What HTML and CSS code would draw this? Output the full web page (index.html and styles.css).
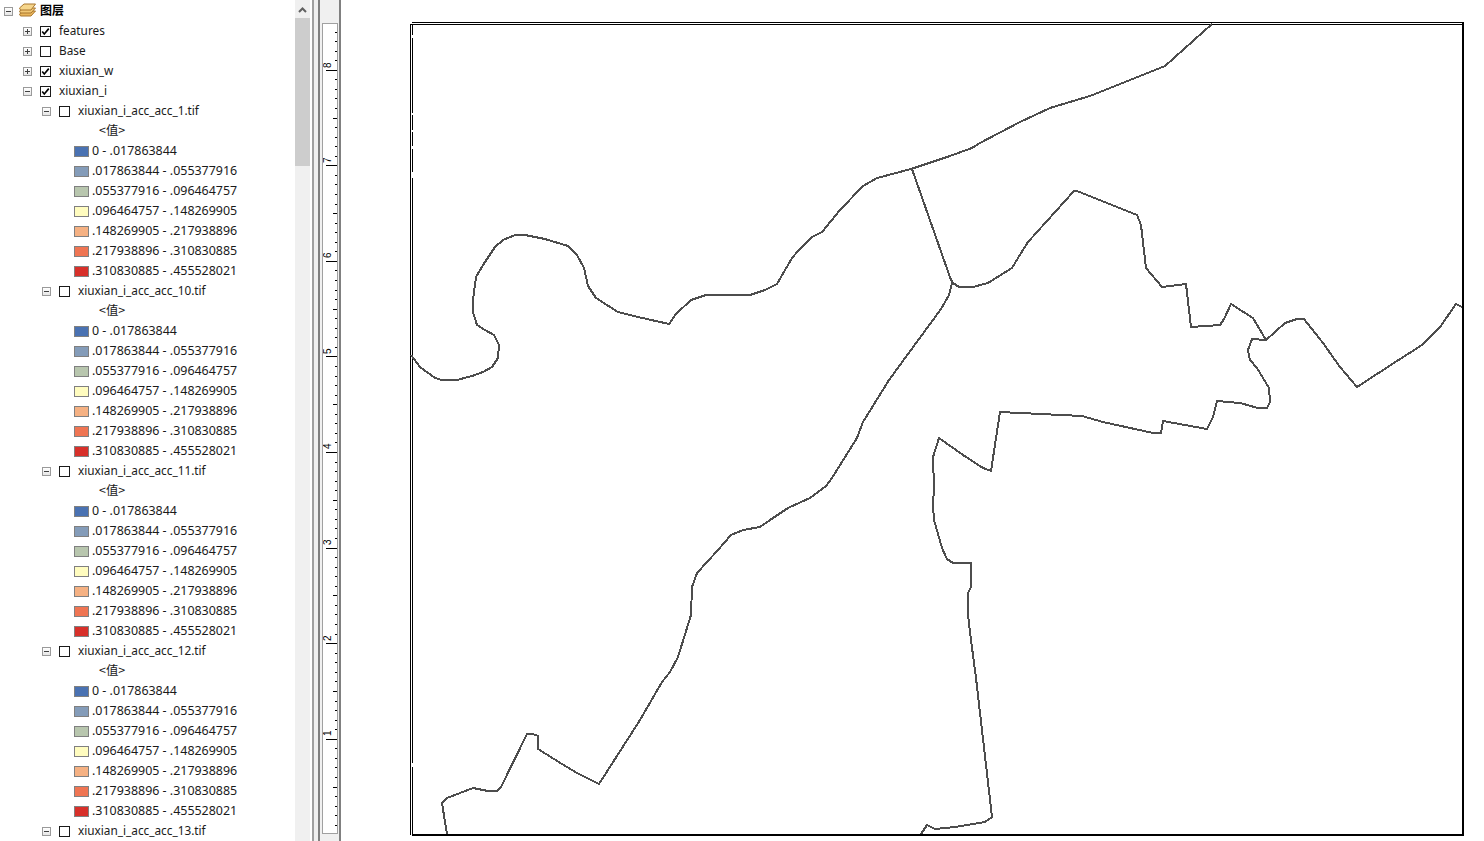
FILE: index.html
```html
<!DOCTYPE html>
<html lang="zh-CN">
<head>
  <meta charset="UTF-8" />
  <title>图层</title>
  <link rel="stylesheet" href="styles.css">
</head>
<body>

<svg class="defs" width="0" height="0">
  <symbol id="tick" viewBox="0 0 11 11">
    <path d="M1.5 5.5 L4 8.5 L9.5 2" fill="none" stroke="#000" stroke-width="2"/>
  </symbol>
</svg>

<aside class="toc">
  <div class="row root">
    <span class="exp"></span>
    <svg class="stack" width="17" height="14" viewBox="0 0 17 14">
      <path d="M0.5 11 L5 8 H16.5 L12 13 H1.5 Z" fill="#e9b65c" stroke="#a9772e"/>
      <path d="M0.5 8 L5 5 H16.5 L12 10 H1.5 Z" fill="#f2c977" stroke="#a9772e"/>
      <path d="M0.5 5 L5 1 H16.5 L12 7 H1.5 Z" fill="#f6d68c" stroke="#a9772e"/>
    </svg>
    <span class="root-name">图层</span>
  </div>

  <div class="row l1"><span class="exp plus"></span><span class="cb"><svg width="11" height="11"><use href="#tick"/></svg></span><span>features</span></div>
  <div class="row l1"><span class="exp plus"></span><span class="cb"></span><span>Base</span></div>
  <div class="row l1"><span class="exp plus"></span><span class="cb"><svg width="11" height="11"><use href="#tick"/></svg></span><span>xiuxian_w</span></div>
  <div class="row l1"><span class="exp"></span><span class="cb"><svg width="11" height="11"><use href="#tick"/></svg></span><span>xiuxian_i</span></div>

  <div class="row l2"><span class="exp"></span><span class="cb"></span><span>xiuxian_i_acc_acc_1.tif</span></div>
  <div class="row val">&lt;值&gt;</div>
  <div class="row key"><span class="sw c1"></span><span>0 - .017863844</span></div>
  <div class="row key"><span class="sw c2"></span><span>.017863844 - .055377916</span></div>
  <div class="row key"><span class="sw c3"></span><span>.055377916 - .096464757</span></div>
  <div class="row key"><span class="sw c4"></span><span>.096464757 - .148269905</span></div>
  <div class="row key"><span class="sw c5"></span><span>.148269905 - .217938896</span></div>
  <div class="row key"><span class="sw c6"></span><span>.217938896 - .310830885</span></div>
  <div class="row key"><span class="sw c7"></span><span>.310830885 - .455528021</span></div>

  <div class="row l2"><span class="exp"></span><span class="cb"></span><span>xiuxian_i_acc_acc_10.tif</span></div>
  <div class="row val">&lt;值&gt;</div>
  <div class="row key"><span class="sw c1"></span><span>0 - .017863844</span></div>
  <div class="row key"><span class="sw c2"></span><span>.017863844 - .055377916</span></div>
  <div class="row key"><span class="sw c3"></span><span>.055377916 - .096464757</span></div>
  <div class="row key"><span class="sw c4"></span><span>.096464757 - .148269905</span></div>
  <div class="row key"><span class="sw c5"></span><span>.148269905 - .217938896</span></div>
  <div class="row key"><span class="sw c6"></span><span>.217938896 - .310830885</span></div>
  <div class="row key"><span class="sw c7"></span><span>.310830885 - .455528021</span></div>

  <div class="row l2"><span class="exp"></span><span class="cb"></span><span>xiuxian_i_acc_acc_11.tif</span></div>
  <div class="row val">&lt;值&gt;</div>
  <div class="row key"><span class="sw c1"></span><span>0 - .017863844</span></div>
  <div class="row key"><span class="sw c2"></span><span>.017863844 - .055377916</span></div>
  <div class="row key"><span class="sw c3"></span><span>.055377916 - .096464757</span></div>
  <div class="row key"><span class="sw c4"></span><span>.096464757 - .148269905</span></div>
  <div class="row key"><span class="sw c5"></span><span>.148269905 - .217938896</span></div>
  <div class="row key"><span class="sw c6"></span><span>.217938896 - .310830885</span></div>
  <div class="row key"><span class="sw c7"></span><span>.310830885 - .455528021</span></div>

  <div class="row l2"><span class="exp"></span><span class="cb"></span><span>xiuxian_i_acc_acc_12.tif</span></div>
  <div class="row val">&lt;值&gt;</div>
  <div class="row key"><span class="sw c1"></span><span>0 - .017863844</span></div>
  <div class="row key"><span class="sw c2"></span><span>.017863844 - .055377916</span></div>
  <div class="row key"><span class="sw c3"></span><span>.055377916 - .096464757</span></div>
  <div class="row key"><span class="sw c4"></span><span>.096464757 - .148269905</span></div>
  <div class="row key"><span class="sw c5"></span><span>.148269905 - .217938896</span></div>
  <div class="row key"><span class="sw c6"></span><span>.217938896 - .310830885</span></div>
  <div class="row key"><span class="sw c7"></span><span>.310830885 - .455528021</span></div>

  <div class="row l2"><span class="exp"></span><span class="cb"></span><span>xiuxian_i_acc_acc_13.tif</span></div>
</aside>

<div class="scrollbar">
  <div class="arrow">
    <svg width="9" height="6" viewBox="0 0 9 6"><path d="M1 5 L4.5 1.5 L8 5" fill="none" stroke="#606060" stroke-width="2"/></svg>
  </div>
  <div class="thumb"></div>
</div>

<div class="splitter"></div>

<div class="ruler-col">
  <div class="ruler">
    <svg width="14" height="809" viewBox="323 24 14 809">
      <path class="ticks" d="M335 32.5h2M335 41.5h2M335 51.5h2M335 60.5h2M335 79.5h2M335 89.5h2M335 98.5h2M335 108.5h2M335 127.5h2M335 137.5h2M335 146.5h2M335 156.5h2M335 175.5h2M335 184.5h2M335 194.5h2M335 204.5h2M335 223.5h2M335 232.5h2M335 242.5h2M335 251.5h2M335 270.5h2M335 280.5h2M335 290.5h2M335 299.5h2M335 318.5h2M335 328.5h2M335 337.5h2M335 347.5h2M335 366.5h2M335 376.5h2M335 385.5h2M335 395.5h2M335 414.5h2M335 423.5h2M335 433.5h2M335 442.5h2M335 462.5h2M335 471.5h2M335 481.5h2M335 490.5h2M335 509.5h2M335 519.5h2M335 528.5h2M335 538.5h2M335 557.5h2M335 567.5h2M335 576.5h2M335 586.5h2M335 605.5h2M335 614.5h2M335 624.5h2M335 634.5h2M335 653.5h2M335 662.5h2M335 672.5h2M335 681.5h2M335 701.5h2M335 710.5h2M335 720.5h2M335 729.5h2M335 748.5h2M335 758.5h2M335 767.5h2M335 777.5h2M335 796.5h2M335 806.5h2M335 815.5h2M335 825.5h2"/>
      <path class="ticks" d="M333 118.5h4M333 213.5h4M333 309.5h4M333 404.5h4M333 500.5h4M333 595.5h4M333 691.5h4M333 787.5h4"/>
      <path class="ticks" d="M326 70.5h11M326 165.5h11M326 261.5h11M326 356.5h11M326 452.5h11M326 548.5h11M326 643.5h11M326 739.5h11"/>
      <text class="rule-num" transform="translate(331 68) rotate(-90)">8</text>
      <text class="rule-num" transform="translate(331 163) rotate(-90)">7</text>
      <text class="rule-num" transform="translate(331 258) rotate(-90)">6</text>
      <text class="rule-num" transform="translate(331 354) rotate(-90)">5</text>
      <text class="rule-num" transform="translate(331 449) rotate(-90)">4</text>
      <text class="rule-num" transform="translate(331 545) rotate(-90)">3</text>
      <text class="rule-num" transform="translate(331 641) rotate(-90)">2</text>
      <text class="rule-num" transform="translate(331 736) rotate(-90)">1</text>
    </svg>
  </div>
</div>

<main class="map">
  <svg width="1143" height="841" viewBox="341 0 1143 841">
    <!-- page frame -->
    <path class="frame" d="M412 22.5H1462M410 24.5H1462M410.5 24V835M412.5 25V35M412.5 38V113M412.5 115V130M412.5 132V146M412.5 149V172M412.5 178V763M412.5 767V834"/>
    <path class="frame-thick" d="M1463 22V836M412 835H1464"/>
    <!-- boundaries -->
    <path class="line" d="M411 355 L420 367 L435 378 L442 380 L457 380 L472 376 L483 372 L492 367 L498 358 L499 345 L494 335 L485 330 L477 325 L473 312 L473 300 L476 277 L483 265 L495 247 L503 240 L515 235 L525 235 L545 239 L568 246 L577 255 L584 268 L588 286 L596 298 L618 312 L638 317 L669 324 L676 314 L691 300 L706 295 L750 295 L765 290 L777 284 L792 258 L798 251 L812 237 L822 232 L840 210 L863 186 L877 178 L911 169 L947 157 L972 148 L980 143 L1020 122 L1050 108 L1090 96 L1165 66 L1212 24"/>
    <path class="line" d="M912 169 L951 280 L953 283 L959 287 L973 287 L988 283 L1012 268 L1018 258 L1028 242 L1074 191 L1077 191 L1137 215 L1141 225 L1146 268 L1162 287 L1186 284 L1191 327 L1220 325 L1224 319 L1231 304 L1253 318 L1266 340 L1285 323 L1297 319 L1304 319 L1323 343 L1340 367 L1357 387 L1397 361 L1422 345 L1440 327 L1456 304 L1462 307"/>
    <path class="line" d="M1266 340 L1252 339 L1248 350 L1250 360 L1257 368 L1269 388 L1270 402 L1267 408 L1258 408 L1240 403 L1217 401 L1213 417 L1207 429 L1163 421 L1161 433 L1153 433 L1103 422 L1082 416 L1000 412 L991 471 L983 468 L963 455 L939 438 L933 457 L934 487 L933 505 L934 520 L942 548 L947 559 L953 563 L971 563 L971 587 L968 593 L968 615 L971 640 L976 678 L992 817 L985 822 L955 827 L935 829 L927 825 L921 834"/>
    <path class="line" d="M952 283 L949 295 L941 309 L889 380 L863 422 L857 438 L832 478 L826 486 L810 498 L788 508 L770 520 L760 527 L743 530 L731 535 L718 550 L697 573 L692 587 L691 615 L678 657 L670 672 L662 682 L640 720 L599 784 L577 773 L562 764 L538 749 L538 736 L533 734 L527 734 L501 787 L497 791 L488 791 L473 788 L447 798 L442 803 L447 834"/>
  </svg>
</main>

</body>
</html>
```

FILE: styles.css
```css
html, body {
  margin: 0;
  padding: 0;
  height: 100%;
  background: #fff;
  overflow: hidden;
}
body {
  display: flex;
  font-family: "Noto Sans", "Noto Sans CJK SC", sans-serif;
  font-size: 11.8px;
  color: #1a1a1a;
}
.defs {
  display: block;
  width: 0;
  flex: none;
}

/* table of contents */
.toc {
  width: 295px;
  height: 841px;
  flex: none;
  overflow: hidden;
}
.row {
  box-sizing: border-box;
  display: flex;
  align-items: center;
  height: 20px;
  white-space: nowrap;
}
.root { padding-left: 4px; }
.l1 { padding-left: 23px; }
.l2 { padding-left: 42px; }
.val {
  padding: 0 0 1px 99px;
  font-family: "Noto Sans CJK SC", sans-serif;
  font-size: 12.4px;
}
.key {
  padding-left: 74px;
  font-size: 12.45px;
}

.root-name {
  margin: 0 0 2px 4px;
  font-family: "Noto Sans CJK SC", sans-serif;
  font-size: 12px;
  font-weight: bold;
  color: #000;
}
.stack {
  margin-left: 6px;
  flex: none;
}

.exp {
  box-sizing: border-box;
  width: 9px;
  height: 9px;
  flex: none;
  margin-top: 2px;
  border: 1px solid #9a9a9a;
  background:
    linear-gradient(#404040, #404040) center / 5px 1px no-repeat,
    linear-gradient(#fff, #e6e6e6);
}
.exp.plus {
  background:
    linear-gradient(#404040, #404040) center / 5px 1px no-repeat,
    linear-gradient(#404040, #404040) center / 1px 5px no-repeat,
    linear-gradient(#fff, #e6e6e6);
}

.cb {
  box-sizing: border-box;
  display: flex;
  width: 11px;
  height: 11px;
  flex: none;
  margin: 3px 8px 0 8px;
  border: 1px solid #1a1a1a;
  background: #fff;
}
.cb svg {
  display: block;
  width: 9px;
  height: 9px;
}

.sw {
  box-sizing: border-box;
  width: 15px;
  height: 11px;
  flex: none;
  margin: 2px 3px 0 0;
  border: 1px solid #808080;
}
.c1 { background: #4a72b2; }
.c2 { background: #849cb9; }
.c3 { background: #b8c6ae; }
.c4 { background: #fffcbf; }
.c5 { background: #f5b183; }
.c6 { background: #ef7553; }
.c7 { background: #d7302a; }

/* scrollbar next to the toc */
.scrollbar {
  width: 15px;
  height: 841px;
  flex: none;
  background: #f0f0f0;
}
.arrow {
  box-sizing: border-box;
  display: flex;
  align-items: center;
  justify-content: center;
  height: 18px;
  padding-top: 2px;
}
.arrow svg { display: block; }
.thumb {
  height: 148px;
  background: #cdcdcd;
}

.splitter {
  box-sizing: border-box;
  width: 8px;
  height: 841px;
  flex: none;
  margin-left: 2px;
  background: #f0f0f0;
  border-left: 2px solid #a0a0a0;
  border-right: 2px solid #808080;
}

/* vertical ruler */
.ruler-col {
  box-sizing: border-box;
  width: 21px;
  height: 841px;
  flex: none;
  padding: 23px 1px 7px 2px;
  background: #f0f0f0;
  border-right: 2px solid #808080;
}
.ruler {
  box-sizing: border-box;
  width: 16px;
  height: 811px;
  background: #fff;
  border: 1px solid #a0a0a0;
}
.ruler svg { display: block; }
.ticks {
  fill: none;
  stroke: #000;
  stroke-width: 1;
  shape-rendering: crispEdges;
}
.rule-num {
  font-family: "Liberation Sans", sans-serif;
  font-size: 10px;
  fill: #000;
}

/* map canvas */
.map {
  flex: 1;
  height: 841px;
  overflow: hidden;
}
.map svg { display: block; }
.frame {
  fill: none;
  stroke: #000;
  stroke-width: 1;
  shape-rendering: crispEdges;
}
.frame-thick {
  fill: none;
  stroke: #000;
  stroke-width: 2;
  shape-rendering: crispEdges;
}
.line {
  fill: none;
  stroke: #4d4d4d;
  stroke-width: 2;
  stroke-linejoin: round;
  shape-rendering: crispEdges;
}
```
